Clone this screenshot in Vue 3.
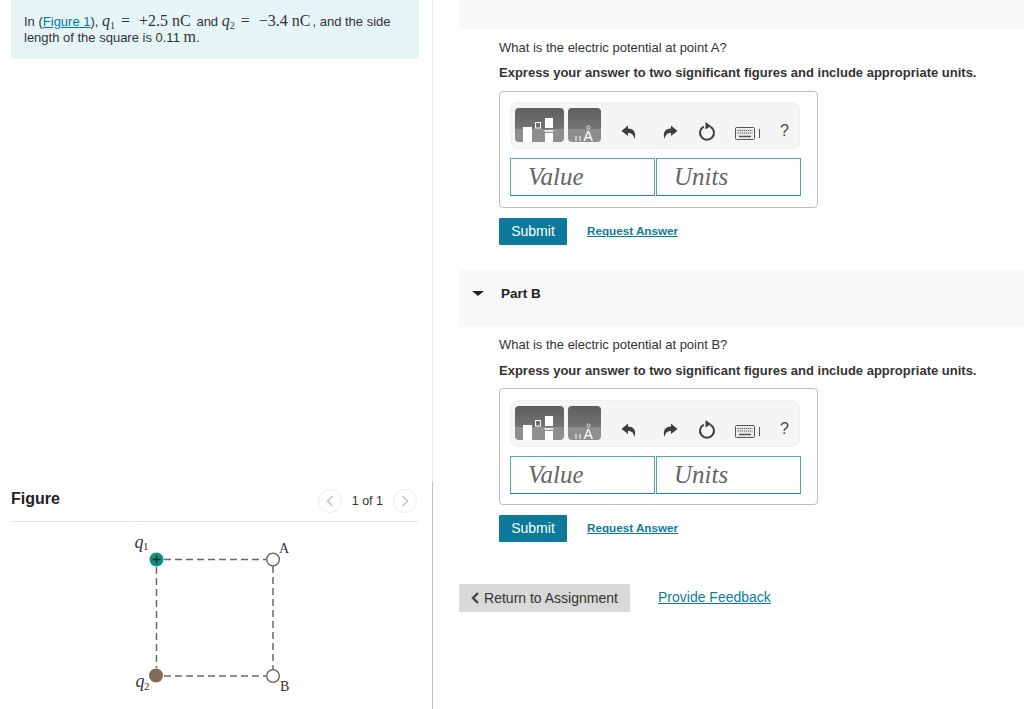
<script setup>
const parts = [
  { id: "A", question: "What is the electric potential at point A?" },
  { id: "B", question: "What is the electric potential at point B?" },
];
</script>

<template>
  <div class="page">
    <div class="left">
      <div class="intro">
        In (<a class="fig-link">Figure 1</a>), <i class="m">q</i><sub class="m">1</sub><span class="m eq">=</span><span class="m val">+2.5 nC</span> and <i class="m">q</i><sub class="m">2</sub><span class="m eq">=</span><span class="m val">−3.4 nC</span>, and the side length of the square is 0.11
        <span class="m">m</span>.
      </div>
      <div class="figure-head">
        <span class="figure-title">Figure</span>
        <div class="pager">
          <span class="page-btn">
            <svg width="8" height="12" viewBox="0 0 8 12"><path d="M6.5 1 L1.5 6 L6.5 11" fill="none" stroke="#c4c4c4" stroke-width="1.5" /></svg>
          </span>
          <span class="page-count">1 of 1</span>
          <span class="page-btn">
            <svg width="8" height="12" viewBox="0 0 8 12"><path d="M1.5 1 L6.5 6 L1.5 11" fill="none" stroke="#c4c4c4" stroke-width="1.5" /></svg>
          </span>
        </div>
      </div>
      <svg class="diagram" width="180" height="187" viewBox="120 522 180 187">
        <g fill="none" stroke="#6a6a6a" stroke-width="1.5" stroke-dasharray="7 4">
          <path d="M164 559.5 H266" />
          <path d="M156.5 567 V668" />
          <path d="M273 566 V669" />
          <path d="M164 676 H266" />
        </g>
        <circle cx="156.5" cy="559.5" r="7" fill="#12917f" />
        <path d="M152.5 559.5 H160.5 M156.5 555.5 V563.5" stroke="#12352f" stroke-width="1.6" />
        <circle cx="156" cy="675.5" r="7" fill="#826a58" />
        <circle cx="273" cy="559.5" r="6.3" fill="#fff" stroke="#5c5c5c" stroke-width="1.3" />
        <circle cx="273" cy="676" r="6.3" fill="#fff" stroke="#5c5c5c" stroke-width="1.3" />
        <text x="134.5" y="548" class="lbl-q">q</text>
        <text x="143" y="550" class="lbl-s">1</text>
        <text x="135.5" y="687" class="lbl-q">q</text>
        <text x="144" y="690" class="lbl-s">2</text>
        <text x="279" y="553" class="lbl-p">A</text>
        <text x="280" y="691" class="lbl-p">B</text>
      </svg>
    </div>

    <div class="right">
      <template v-for="part in parts" :key="part.id">
        <div class="part-head" :class="'part-' + part.id">
          <span v-if="part.id === 'B'" class="caret"></span>
          <span class="part-name">Part {{ part.id }}</span>
        </div>
        <div class="part-body" :class="'body-' + part.id">
          <p class="question">{{ part.question }}</p>
          <p class="express">Express your answer to two significant figures and include appropriate units.</p>
          <div class="answer-box">
            <div class="toolbar">
              <span class="tpl tpl-a">
                <svg width="49" height="34" viewBox="0 0 49 34">
                  <rect x="8" y="19" width="9" height="15" fill="#fff" />
                  <rect x="20.5" y="14.5" width="5" height="5.5" fill="none" stroke="#fff" stroke-width="1" />
                  <rect x="30" y="10" width="8" height="10" fill="#fff" />
                  <rect x="29.5" y="22" width="9" height="2" fill="#e4e4e4" />
                  <rect x="30" y="25" width="8" height="9" fill="#fff" />
                </svg>
              </span>
              <span class="tpl tpl-b">
                <svg width="33" height="34" viewBox="0 0 33 34">
                  <path d="M8 28 V33 M12 28 V33" stroke="#fff" stroke-width="1" />
                  <circle cx="20.5" cy="19.5" r="1.6" fill="none" stroke="#fff" stroke-width="0.8" />
                  <text x="15.5" y="33" class="ang">A</text>
                </svg>
              </span>
              <span class="tool t-undo">
                <svg width="16" height="16" viewBox="0 0 16 16"><path d="M7 1.5 L0.5 7 L7 12 V9 C10.5 9 12.5 10.5 13.5 15 C15.5 9 13 4.8 7 4.6 Z" fill="#3e3e3e" /></svg>
              </span>
              <span class="tool t-redo">
                <svg width="16" height="16" viewBox="0 0 16 16"><path d="M9 1.5 L15.5 7 L9 12 V9 C5.5 9 3.5 10.5 2.5 15 C0.5 9 3 4.8 9 4.6 Z" fill="#3e3e3e" /></svg>
              </span>
              <span class="tool t-reset">
                <svg width="18" height="20" viewBox="0 0 18 20"><path d="M5.8 5.6 A7 7 0 1 0 12.2 5.6" fill="none" stroke="#3e3e3e" stroke-width="2" /><path d="M7.5 1 L13 5 L7.5 8.5 Z" fill="#3e3e3e" /></svg>
              </span>
              <span class="tool t-keys">
                <svg width="20" height="13" viewBox="0 0 20 13">
                  <rect x="0.5" y="0.5" width="19" height="12" rx="1" fill="#ececec" stroke="#555" />
                  <path d="M2.5 3.5 H17.5 M2.5 6 H17.5" stroke="#555" stroke-width="1.2" stroke-dasharray="1.3 0.8" />
                  <path d="M4 9.5 H16" stroke="#555" stroke-width="1.5" />
                </svg>
              </span>
              <span class="bar"></span>
              <span class="help">?</span>
            </div>
            <div class="inputs">
              <input class="field" placeholder="Value" />
              <input class="field" placeholder="Units" />
            </div>
          </div>
          <div class="actions">
            <button class="submit">Submit</button>
            <a class="request">Request Answer</a>
          </div>
        </div>
      </template>
      <div class="footer">
        <button class="return">
          <svg width="9" height="12" viewBox="0 0 9 12"><path d="M7 1 L2 6 L7 11" fill="none" stroke="#444" stroke-width="2.4" /></svg>
          Return to Assignment
        </button>
        <a class="feedback">Provide Feedback</a>
      </div>
    </div>
  </div>
</template>

<style>
body {
  margin: 0;
  background: #fff;
}
</style>

<style scoped>
.page {
  display: flex;
  width: 1024px;
  height: 709px;
  overflow: hidden;
  font-family: "Liberation Sans", Arial, sans-serif;
  color: #333;
}
.left {
  width: 433px;
  height: 709px;
  box-sizing: border-box;
  padding-left: 11px;
  /* the divider turns darker where the figure starts */
  background: linear-gradient(#e4eef5 0 482px, #b4c2d0 482px) right top / 1px 100% no-repeat;
  display: flex;
  flex-direction: column;
}
.intro {
  width: 408px;
  height: 59px;
  box-sizing: border-box;
  padding: 14px 13px 0;
  background: #e5f5f6;
  font-size: 13px;
  line-height: 16px;
}
.m {
  font-family: "Liberation Serif", serif;
  font-size: 16px;
  line-height: 0;
}
sub.m {
  font-size: 10px;
  line-height: 0;
  vertical-align: -3px;
}
.eq {
  margin: 0 9px 0 6px;
}
.val {
  margin-right: 2px;
}
.fig-link {
  color: #007c9e;
  text-decoration: underline;
}
.figure-head {
  width: 407px;
  height: 41px;
  margin-top: 422px;
  box-sizing: border-box;
  border-bottom: 1px solid #e2e2e2;
  display: flex;
  align-items: center;
  justify-content: space-between;
  padding-bottom: 4px;
}
.figure-title {
  font-size: 16px;
  font-weight: 700;
  color: #222;
}
.pager {
  display: flex;
  align-items: center;
  gap: 10px;
  margin: 4px 1px 0 0;
  font-size: 12.5px;
}
.page-btn {
  width: 24px;
  height: 24px;
  box-sizing: border-box;
  border: 1px solid #ececec;
  border-radius: 50%;
  display: flex;
  align-items: center;
  justify-content: center;
}
.page-count {
  color: #333;
}
.diagram {
  display: block;
  margin-left: 109px;
}
.lbl-q {
  font-family: "Liberation Serif", serif;
  font-style: italic;
  font-size: 18px;
  fill: #333;
}
.lbl-s {
  font-family: "Liberation Serif", serif;
  font-size: 11px;
  fill: #333;
}
.lbl-p {
  font-family: "Liberation Serif", serif;
  font-size: 14px;
  fill: #333;
}
.ang {
  font-family: "Liberation Sans", sans-serif;
  font-size: 14px;
  fill: #fff;
}
.right {
  margin-left: 26px;
  flex: 1;
  min-width: 0;
}
.part-head {
  background: #f8f8f8;
  display: flex;
  align-items: center;
  font-size: 13.5px;
  font-weight: 700;
  color: #222;
}
.part-A {
  height: 29px;
  overflow: hidden;
  align-items: flex-start;
  padding-left: 42px;
}
.part-A .part-name {
  margin-top: -14px;
}
.part-B {
  height: 57px;
  margin-top: 25px;
  padding-bottom: 11px;
  box-sizing: border-box;
}
.caret {
  width: 0;
  height: 0;
  margin-left: 13px;
  margin-right: 17px;
  border-left: 6px solid transparent;
  border-right: 6px solid transparent;
  border-top: 5px solid #222;
}
.part-body {
  padding-left: 40px;
}
.question {
  margin: 0;
  padding-top: 10px;
  font-size: 13px;
  line-height: 16px;
}
.body-A .question {
  padding-top: 11px;
}
.express {
  margin: 10px 0 0;
  font-size: 13px;
  font-weight: 700;
  line-height: 16px;
}
.body-A .express {
  margin-top: 9px;
}
.answer-box {
  width: 319px;
  height: 117px;
  margin-top: 9px;
  box-sizing: border-box;
  padding: 11px 17px 0 10px;
  border: 1px solid #bdbdbd;
  border-radius: 4px;
}
.body-A .answer-box {
  margin-top: 10px;
  padding-top: 10px;
}
.toolbar {
  height: 47px;
  box-sizing: border-box;
  padding: 5px 0 0 4px;
  display: flex;
  align-items: flex-start;
  background: #f5f5f5;
  border: 1px solid #efefef;
  border-radius: 8px;
}
.tpl {
  display: block;
  height: 34px;
  border-radius: 4px;
  overflow: hidden;
  background: linear-gradient(#5e5e5e 0, #747474 62%, #8e8e8e 62%, #8e8e8e 100%);
}
.tpl svg {
  display: block;
}
.tpl-a {
  width: 49px;
}
.tpl-b {
  width: 33px;
  margin-left: 4px;
}
.tool {
  display: flex;
  margin-top: 16px;
}
.t-undo {
  margin-left: 20px;
}
.t-redo {
  margin-left: 25px;
}
.t-reset {
  margin-left: 20px;
  margin-top: 13px;
}
.t-keys {
  margin-left: 19px;
  margin-top: 19px;
}
.bar {
  width: 1px;
  height: 9px;
  margin: 21px 0 0 4px;
  background: #555;
}
.help {
  margin: 14px 0 0 20px;
  font-size: 16px;
  color: #444;
}
.inputs {
  display: flex;
  gap: 1px;
  margin-top: 9px;
}
.field {
  width: 145px;
  height: 38px;
  box-sizing: border-box;
  padding: 0 0 0 17px;
  border: 1px solid #4fa5bb;
  border-bottom-color: #2a7f9c;
  border-radius: 0;
  outline: none;
  background: #fff;
  font-family: "Liberation Serif", serif;
  font-style: italic;
  font-size: 25px;
}
.field::placeholder {
  color: #666;
  opacity: 1;
}
.actions {
  display: flex;
  align-items: center;
  gap: 20px;
  margin-top: 10px;
}
.submit {
  width: 68px;
  height: 27px;
  padding: 0 0 2px;
  border: 0;
  border-radius: 1px;
  background: #0b7a9b;
  color: #fff;
  font-family: "Liberation Sans", Arial, sans-serif;
  font-size: 14px;
}
.request {
  margin-top: -3px;
  font-size: 11.7px;
  font-weight: 700;
  color: #0f7c9d;
  text-decoration: underline;
}
.footer {
  display: flex;
  align-items: center;
  margin-top: 42px;
}
.return {
  width: 171px;
  height: 28px;
  padding: 0 0 1px;
  border: 0;
  border-radius: 2px;
  background: #d9d9d9;
  color: #333;
  font-family: "Liberation Sans", Arial, sans-serif;
  font-size: 14px;
  display: flex;
  align-items: center;
  justify-content: center;
  gap: 4px;
}
.feedback {
  margin-left: 28px;
  margin-top: -3px;
  font-size: 14px;
  color: #0f7c9d;
  text-decoration: underline;
}
</style>
